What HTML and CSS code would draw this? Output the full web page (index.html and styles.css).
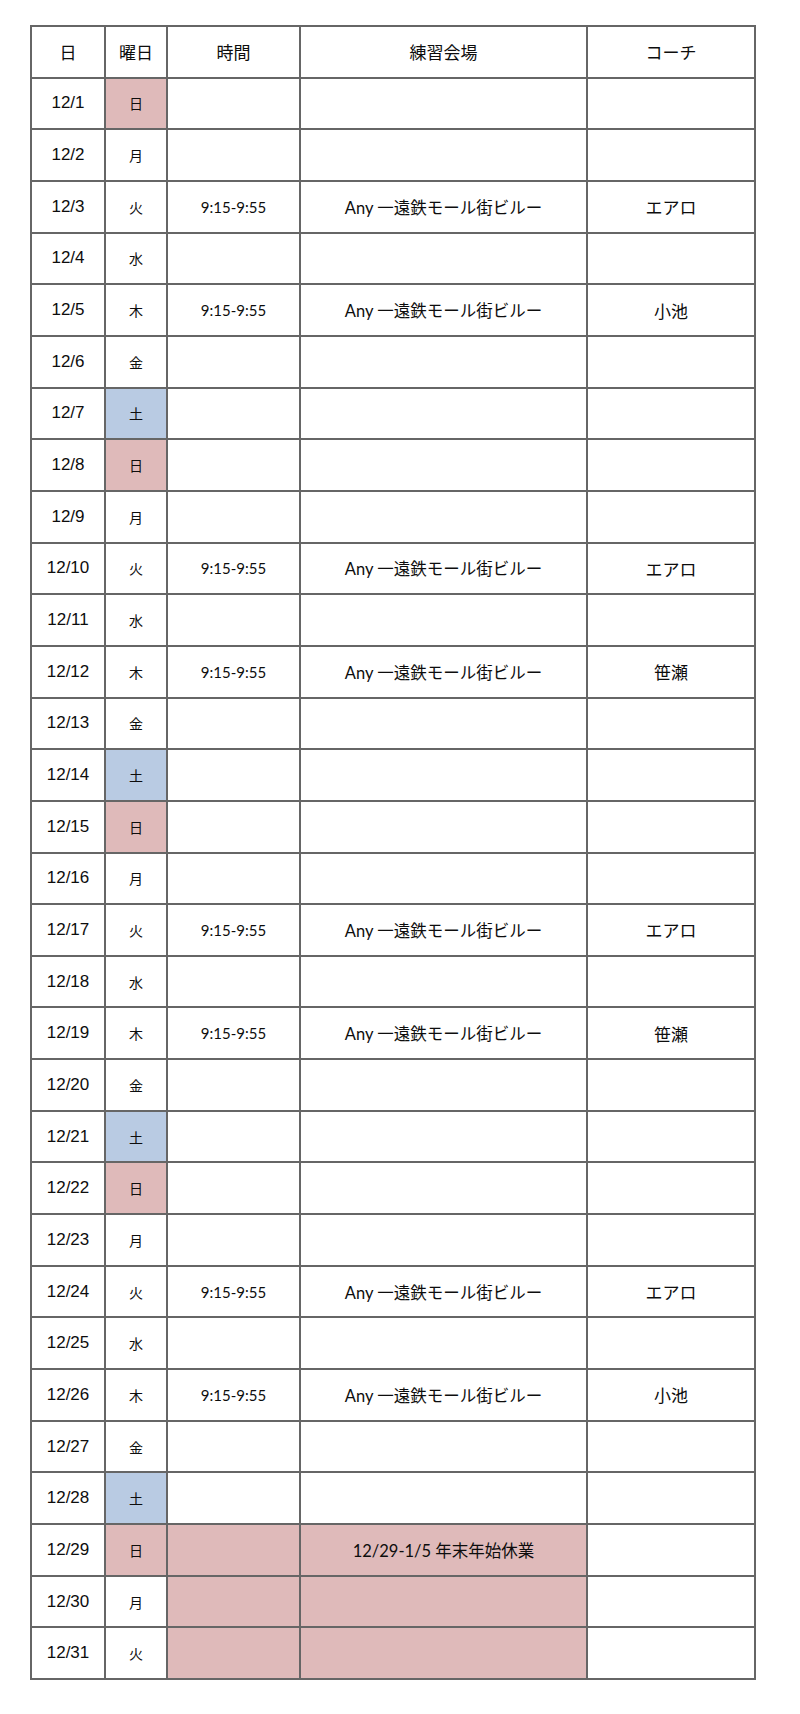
FILE: index.html
```html
<!DOCTYPE html>
<html lang="ja">
<head>
<meta charset="utf-8">
<link rel="stylesheet" href="styles.css">
<title>12月 練習スケジュール</title>
</head>
<body>
<table class="sched">
<colgroup>
<col class="c-date"><col class="c-dow"><col class="c-time"><col class="c-venue"><col class="c-coach">
</colgroup>
<thead>
<tr><th>日</th><th>曜日</th><th>時間</th><th>練習会場</th><th>コーチ</th></tr>
</thead>
<tbody>
<tr><td class="date">12/1</td><td class="dow sun">日</td><td></td><td></td><td></td></tr>
<tr><td class="date">12/2</td><td class="dow">月</td><td></td><td></td><td></td></tr>
<tr><td class="date">12/3</td><td class="dow">火</td><td class="time">9:15-9:55</td><td class="venue">Any 一遠鉄モール街ビルー</td><td class="coach">エアロ</td></tr>
<tr><td class="date">12/4</td><td class="dow">水</td><td></td><td></td><td></td></tr>
<tr><td class="date">12/5</td><td class="dow">木</td><td class="time">9:15-9:55</td><td class="venue">Any 一遠鉄モール街ビルー</td><td class="coach">小池</td></tr>
<tr><td class="date">12/6</td><td class="dow">金</td><td></td><td></td><td></td></tr>
<tr><td class="date">12/7</td><td class="dow sat">土</td><td></td><td></td><td></td></tr>
<tr><td class="date">12/8</td><td class="dow sun">日</td><td></td><td></td><td></td></tr>
<tr><td class="date">12/9</td><td class="dow">月</td><td></td><td></td><td></td></tr>
<tr><td class="date">12/10</td><td class="dow">火</td><td class="time">9:15-9:55</td><td class="venue">Any 一遠鉄モール街ビルー</td><td class="coach">エアロ</td></tr>
<tr><td class="date">12/11</td><td class="dow">水</td><td></td><td></td><td></td></tr>
<tr><td class="date">12/12</td><td class="dow">木</td><td class="time">9:15-9:55</td><td class="venue">Any 一遠鉄モール街ビルー</td><td class="coach">笹瀬</td></tr>
<tr><td class="date">12/13</td><td class="dow">金</td><td></td><td></td><td></td></tr>
<tr><td class="date">12/14</td><td class="dow sat">土</td><td></td><td></td><td></td></tr>
<tr><td class="date">12/15</td><td class="dow sun">日</td><td></td><td></td><td></td></tr>
<tr><td class="date">12/16</td><td class="dow">月</td><td></td><td></td><td></td></tr>
<tr><td class="date">12/17</td><td class="dow">火</td><td class="time">9:15-9:55</td><td class="venue">Any 一遠鉄モール街ビルー</td><td class="coach">エアロ</td></tr>
<tr><td class="date">12/18</td><td class="dow">水</td><td></td><td></td><td></td></tr>
<tr><td class="date">12/19</td><td class="dow">木</td><td class="time">9:15-9:55</td><td class="venue">Any 一遠鉄モール街ビルー</td><td class="coach">笹瀬</td></tr>
<tr><td class="date">12/20</td><td class="dow">金</td><td></td><td></td><td></td></tr>
<tr><td class="date">12/21</td><td class="dow sat">土</td><td></td><td></td><td></td></tr>
<tr><td class="date">12/22</td><td class="dow sun">日</td><td></td><td></td><td></td></tr>
<tr><td class="date">12/23</td><td class="dow">月</td><td></td><td></td><td></td></tr>
<tr><td class="date">12/24</td><td class="dow">火</td><td class="time">9:15-9:55</td><td class="venue">Any 一遠鉄モール街ビルー</td><td class="coach">エアロ</td></tr>
<tr><td class="date">12/25</td><td class="dow">水</td><td></td><td></td><td></td></tr>
<tr><td class="date">12/26</td><td class="dow">木</td><td class="time">9:15-9:55</td><td class="venue">Any 一遠鉄モール街ビルー</td><td class="coach">小池</td></tr>
<tr><td class="date">12/27</td><td class="dow">金</td><td></td><td></td><td></td></tr>
<tr><td class="date">12/28</td><td class="dow sat">土</td><td></td><td></td><td></td></tr>
<tr><td class="date">12/29</td><td class="dow sun">日</td><td class="off"></td><td class="venue off">12/29-1/5 年末年始休業</td><td></td></tr>
<tr><td class="date">12/30</td><td class="dow">月</td><td class="off"></td><td class="off"></td><td></td></tr>
<tr><td class="date">12/31</td><td class="dow">火</td><td class="off"></td><td class="off"></td><td></td></tr>
</tbody>
</table>
</body>
</html>
```
FILE: styles.css
```css
html, body {
  margin: 0;
  padding: 0;
  background: #ffffff;
}

body {
  padding: 25px 0 0 30px;
  color: #0d0d0d;
  font-family: "Noto Sans CJK JP", "Liberation Sans", sans-serif;
}

.sched {
  table-layout: fixed;
  width: 726px;
  border-collapse: separate;
  border-spacing: 0;
  border-left: 2px solid #666666;
  border-top: 2px solid #666666;
}

.c-date { width: 74px; }
.c-dow { width: 62px; }
.c-time { width: 133px; }
.c-venue { width: 287px; }
.c-coach { width: 168px; }

.sched tr {
  height: 51.66px;
}

.sched th,
.sched td {
  padding: 0;
  border-right: 2px solid #666666;
  border-bottom: 2px solid #666666;
  text-align: center;
  vertical-align: middle;
}

.sched th {
  font-weight: normal;
  font-size: 17px;
  font-family: "Noto Sans CJK JP", sans-serif;
}

.date {
  font-family: "Liberation Sans", Arial, sans-serif;
  font-size: 17px;
}

.dow {
  font-family: "Noto Sans CJK JP", sans-serif;
  font-size: 14px;
}

.time {
  font-family: Lato, "Noto Sans CJK JP", sans-serif;
  font-size: 15px;
  padding-bottom: 2px;
}

.venue {
  font-family: Lato, "Noto Sans CJK JP", sans-serif;
  font-size: 16.5px;
  padding-bottom: 4px;
}

.coach {
  font-family: "Noto Sans CJK JP", sans-serif;
  font-size: 17px;
}

.sched td.sun,
.sched td.off {
  background: #dfbaba;
}

.sched td.sat {
  background: #b9cbe3;
}
```
